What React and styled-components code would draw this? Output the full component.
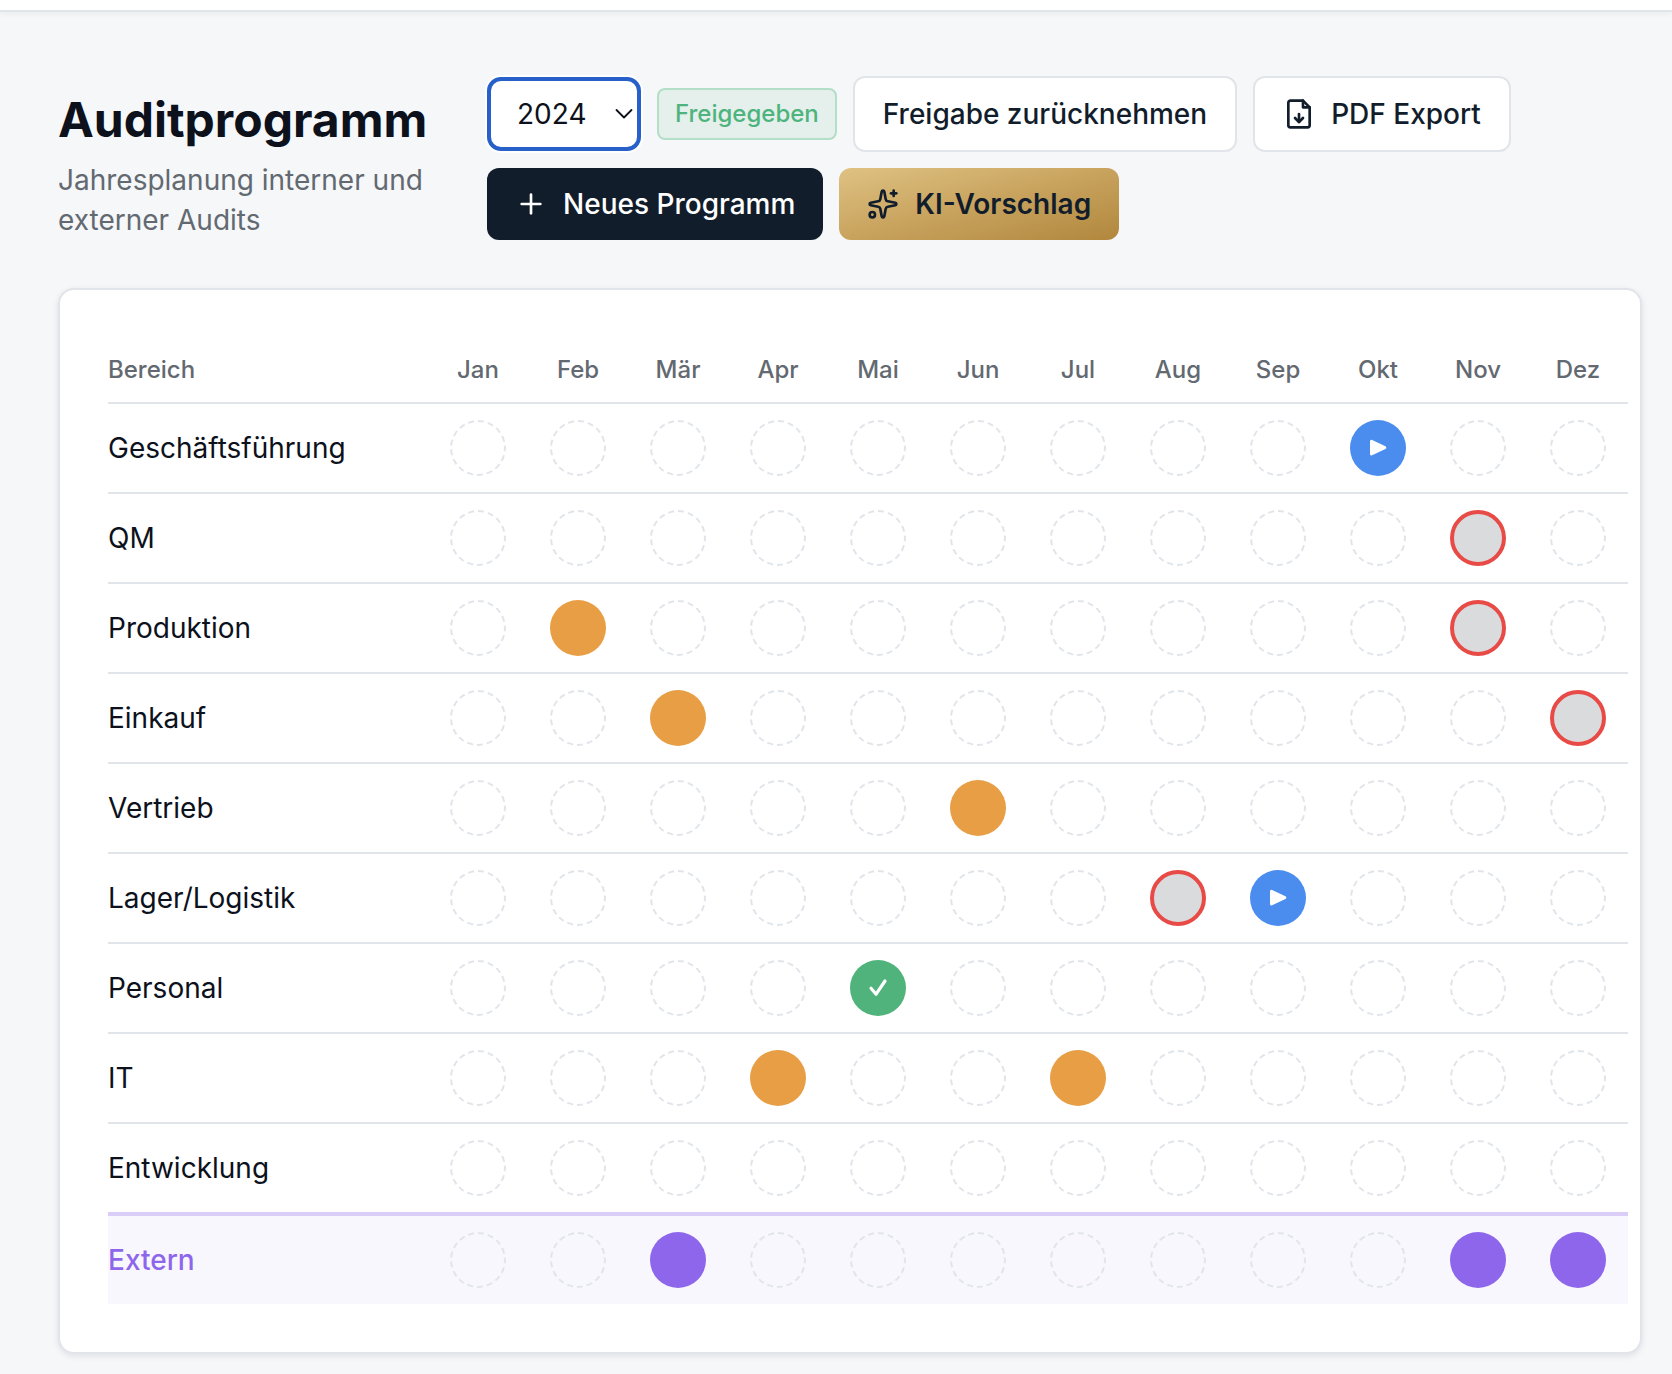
import React, { useState } from "react";
import styled, { createGlobalStyle, css } from "styled-components";
import { Plus, Sparkles } from "lucide-react";

const GlobalStyle = createGlobalStyle`
  *, *::before, *::after { box-sizing: border-box; }
  body {
    margin: 0;
    background: #f5f7f9;
    color: #0c111c;
    font-family: Inter, "Liberation Sans", sans-serif;
    font-size: 28px;
    line-height: 40px;
    -webkit-font-smoothing: antialiased;
  }
  button, select { font: inherit; color: inherit; }
`;

const TopBar = styled.div`
  height: 12px;
  background: #ffffff;
  border-bottom: 2px solid #e1e5ea;
  box-shadow: 0 2px 6px rgba(16, 24, 40, 0.05);
`;

const Main = styled.main`
  padding: 64px 30px 20px 58px;
`;

const PageHeader = styled.header`
  display: flex;
  align-items: flex-end;
  gap: 48px;
  margin-bottom: 48px;
`;

const Heading = styled.div`
  flex: 0 0 381px;
`;

const Title = styled.h1`
  margin: 0 0 8px;
  font-size: 48px;
  line-height: 64px;
  font-weight: 700;
`;

const Subtitle = styled.p`
  margin: 0;
  color: #636971;
`;

const Actions = styled.div`
  flex: 1;
  display: flex;
  flex-wrap: wrap;
  align-items: center;
  gap: 16px;
`;

const SelectBox = styled.div`
  display: grid;
  align-items: center;
  width: 154px;

  & > * { grid-area: 1 / 1; }
`;

const YearSelect = styled.select`
  appearance: none;
  width: 100%;
  height: 74px;
  padding: 0 26px;
  border: 4px solid #2860ca;
  border-radius: 14px;
  background: #ffffff;
  box-shadow: 0 0 0 2px #ffffff;
  outline: none;
`;

const Chevron = styled.svg`
  justify-self: end;
  margin-right: 8px;
  pointer-events: none;
`;

const StatusBadge = styled.span`
  padding: 4px 16px;
  border: 2px solid #b3dec8;
  border-radius: 8px;
  background: #e5efeb;
  color: #4eb47e;
  font-size: 24px;
  font-weight: 500;
`;

const variants = {
  outline: css`
    padding: 16px 28px;
    border: 2px solid #e1e5ea;
    background: #ffffff;
    color: #121d2c;
  `,
  dark: css`
    background: #121d2c;
    color: #ffffff;
  `,
  gold: css`
    background: linear-gradient(to bottom right, #dfc283 0%, #c8a35e 50%, #b1873d 100%);
    color: #121d2c;
    font-weight: 600;
  `,
};

const Button = styled.button`
  display: inline-flex;
  align-items: center;
  gap: 16px;
  padding: 16px 28px;
  border: 0;
  border-radius: 12px;
  font-weight: 500;
  white-space: nowrap;
  cursor: pointer;
  ${(p) => variants[p.$variant]}
`;

const Card = styled.section`
  padding: 48px 12px 48px 48px;
  border: 2px solid #e1e5ea;
  border-radius: 16px;
  background: #ffffff;
  box-shadow: 0 2px 6px rgba(16, 24, 40, 0.1);
`;

const Plan = styled.table`
  width: 100%;
  table-layout: fixed;
  border-collapse: separate;
  border-spacing: 0;
`;

const HeadCell = styled.th`
  width: ${(p) => (p.$area ? "320px" : "auto")};
  height: 66px;
  padding: 0;
  border-bottom: 2px solid #e1e5ea;
  color: #636971;
  font-size: 24px;
  font-weight: 500;
  text-align: ${(p) => (p.$area ? "left" : "center")};
`;

const Row = styled.tr`
  & > * {
    padding: 16px 0;
    border-bottom: ${(p) => (p.$rule ? "2px solid #e1e5ea" : "0")};
  }

  ${(p) =>
    p.$external &&
    css`
      background: #f8f7fe;
      color: #8e66eb;

      & > * { border-top: 4px solid #dacdf8; }
      & > th { font-weight: 500; }
    `}
`;

const AreaCell = styled.th`
  font-weight: 400;
  text-align: left;
`;

const MonthCell = styled.td`
  text-align: center;
`;

const slotLooks = {
  empty: css`border: 2px dashed #e1e5ea;`,
  planned: css`background: #e89e44;`,
  running: css`background: #4b8cef;`,
  done: css`background: #4fb37b;`,
  overdue: css`
    border: 4px solid #e84a46;
    background: #dadbdd;
  `,
  external: css`background: #8e66eb;`,
};

const Slot = styled.button`
  display: flex;
  align-items: center;
  justify-content: center;
  width: 56px;
  height: 56px;
  margin: 0 auto;
  padding: 0;
  border: 0;
  border-radius: 50%;
  background: transparent;
  cursor: pointer;
  ${(p) => slotLooks[p.$status]}
`;

const months = ["Jan", "Feb", "Mär", "Apr", "Mai", "Jun", "Jul", "Aug", "Sep", "Okt", "Nov", "Dez"];

const areas = [
  { name: "Geschäftsführung", audits: { Okt: "running" } },
  { name: "QM", audits: { Nov: "overdue" } },
  { name: "Produktion", audits: { Feb: "planned", Nov: "overdue" } },
  { name: "Einkauf", audits: { Mär: "planned", Dez: "overdue" } },
  { name: "Vertrieb", audits: { Jun: "planned" } },
  { name: "Lager/Logistik", audits: { Aug: "overdue", Sep: "running" } },
  { name: "Personal", audits: { Mai: "done" } },
  { name: "IT", audits: { Apr: "planned", Jul: "planned" } },
  { name: "Entwicklung", audits: {} },
  { name: "Extern", external: true, audits: { Mär: "external", Nov: "external", Dez: "external" } },
];

function PdfGlyph() {
  return (
    <svg
      width="32"
      height="32"
      viewBox="0 0 24 24"
      fill="none"
      stroke="currentColor"
      strokeWidth="2"
      strokeLinecap="round"
      strokeLinejoin="round"
      aria-hidden="true"
    >
      <path d="M15 2H5.6A1.6 1.6 0 0 0 4 3.6v16.8A1.6 1.6 0 0 0 5.6 22h12.8a1.6 1.6 0 0 0 1.6-1.6V7z" />
      <path d="M15 2v5h5" />
      <path d="M12 18v-6" />
      <path d="M9 15l3 3l3-3" />
    </svg>
  );
}

function PlayGlyph() {
  return (
    <svg width="20" height="20" viewBox="0 0 20 20" aria-hidden="true">
      <path
        d="M3.5 3.4v12.6L16.8 9.7z"
        fill="#fff"
        stroke="#fff"
        strokeWidth="3"
        strokeLinejoin="round"
      />
    </svg>
  );
}

function CheckGlyph() {
  return (
    <svg width="20" height="20" viewBox="0 0 20 20" aria-hidden="true">
      <path
        d="M3 10.2L8.1 16.2L17 3"
        fill="none"
        stroke="#fff"
        strokeWidth="3.2"
        strokeLinecap="round"
        strokeLinejoin="round"
      />
    </svg>
  );
}

function AuditSlot({ area, month, status = "empty" }) {
  return (
    <Slot type="button" $status={status} aria-label={`${area} ${month}`}>
      {status === "running" && <PlayGlyph />}
      {status === "done" && <CheckGlyph />}
    </Slot>
  );
}

function YearPicker() {
  const [year, setYear] = useState("2024");
  return (
    <SelectBox>
      <YearSelect aria-label="Jahr" value={year} onChange={(e) => setYear(e.target.value)}>
        <option>2024</option>
      </YearSelect>
      <Chevron width="18" height="12" viewBox="0 0 18 12" aria-hidden="true">
        <path
          d="M1.5 2L9 9.5L16.5 2"
          fill="none"
          stroke="#0c111c"
          strokeWidth="1.8"
          strokeLinecap="round"
          strokeLinejoin="round"
        />
      </Chevron>
    </SelectBox>
  );
}

export default function App() {
  return (
    <>
      <GlobalStyle />
      <TopBar />
      <Main>
        <PageHeader>
          <Heading>
            <Title>Auditprogramm</Title>
            <Subtitle>Jahresplanung interner und externer Audits</Subtitle>
          </Heading>
          <Actions>
            <YearPicker />
            <StatusBadge>Freigegeben</StatusBadge>
            <Button type="button" $variant="outline">Freigabe zurücknehmen</Button>
            <Button type="button" $variant="outline">
              <PdfGlyph />
              PDF Export
            </Button>
            <Button type="button" $variant="dark">
              <Plus size={32} strokeWidth={2} aria-hidden="true" />
              Neues Programm
            </Button>
            <Button type="button" $variant="gold">
              <Sparkles size={32} aria-hidden="true" />
              KI-Vorschlag
            </Button>
          </Actions>
        </PageHeader>
        <Card>
          <Plan>
            <thead>
              <tr>
                <HeadCell scope="col" $area>Bereich</HeadCell>
                {months.map((m) => (
                  <HeadCell key={m} scope="col">{m}</HeadCell>
                ))}
              </tr>
            </thead>
            <tbody>
              {areas.map((area, i) => (
                <Row key={area.name} $external={area.external} $rule={i < areas.length - 2}>
                  <AreaCell scope="row">{area.name}</AreaCell>
                  {months.map((m) => (
                    <MonthCell key={m}>
                      <AuditSlot area={area.name} month={m} status={area.audits[m]} />
                    </MonthCell>
                  ))}
                </Row>
              ))}
            </tbody>
          </Plan>
        </Card>
      </Main>
    </>
  );
}
